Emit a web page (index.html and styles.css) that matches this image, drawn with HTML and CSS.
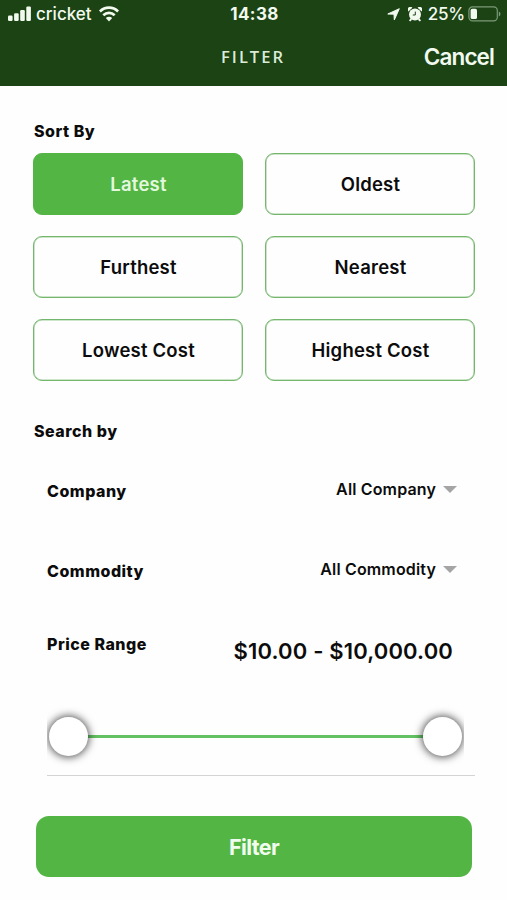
FILE: index.html
```
<!DOCTYPE html>
<html lang="en">
<head>
  <meta charset="UTF-8" />
  <meta name="viewport" content="width=device-width, initial-scale=1.0" />
  <title>Filter</title>
  <link rel="stylesheet" href="styles.css">
</head>
<body>

  <header class="header">
    <!-- Status bar -->
    <div class="status">
      <div class="status-left">
        <svg class="signal" width="24" height="16" viewBox="0 0 24 16" fill="currentColor">
          <rect x="0" y="9.6" width="4.6" height="5.4" rx="1.2"/>
          <rect x="6.1" y="7.2" width="4.6" height="7.8" rx="1.2"/>
          <rect x="12.2" y="4" width="4.6" height="11" rx="1.2"/>
          <rect x="18.3" y="0.6" width="4.6" height="14.4" rx="1.2"/>
        </svg>
        <span class="carrier">cricket</span>
        <svg class="wifi" width="20" height="16" viewBox="0 0 20 16" fill="none" stroke="currentColor" stroke-width="2.7">
          <path d="M0.9 5.5 C6 0.4 14 0.4 19.1 5.5"/>
          <path d="M4.3 9.2 C7.6 6 12.4 6 15.7 9.2"/>
          <path d="M10 15.4 L6.8 12.1 C8.6 10.4 11.4 10.4 13.2 12.1 Z" fill="currentColor" stroke="none"/>
        </svg>
      </div>
      <span class="time">14:38</span>
      <div class="status-right">
        <svg class="location" width="13" height="13" viewBox="0 0 13 13" fill="currentColor" stroke="currentColor" stroke-width="1" stroke-linejoin="round">
          <path d="M12.3 0.7 L7.3 12 L7 6.2 L0.8 6 Z"/>
        </svg>
        <svg class="alarm" width="14" height="15" viewBox="0 0 14 15">
          <g fill="currentColor">
            <circle cx="7" cy="7.6" r="6"/>
            <path d="M0.3 4.5 A2.5 2.5 0 0 1 4.4 0.8 Z"/>
            <path d="M13.7 4.5 A2.5 2.5 0 0 0 9.6 0.8 Z"/>
            <path d="M2.6 11.2 L4.1 12.8 L2.2 14.6 L1 13.4 Z"/>
            <path d="M11.4 11.2 L9.9 12.8 L11.8 14.6 L13 13.4 Z"/>
          </g>
          <path d="M7.3 4.6 V8 H4.8" fill="none" stroke="#1b4314" stroke-width="1"/>
        </svg>
        <span class="percent">25%</span>
        <svg class="battery" width="33" height="16" viewBox="0 0 33 16">
          <rect x="0.9" y="0.9" width="28.4" height="14" rx="3.6" fill="none" stroke="#7d9a79" stroke-width="1.2"/>
          <rect x="2.6" y="2.8" width="6.4" height="10.2" rx="1.6" fill="currentColor"/>
          <path d="M30.8 5.4 Q32.5 6.2 32.5 7.9 Q32.5 9.6 30.8 10.4 Z" fill="#7d9a79"/>
        </svg>
      </div>
    </div>

    <!-- Navigation bar -->
    <div class="navbar">
      <span class="title">FILTER</span>
      <a class="cancel" href="#">Cancel</a>
    </div>
  </header>

  <main class="content">
    <h2 class="heading">Sort By</h2>
    <div class="sort-grid">
      <button class="sort-btn active">Latest</button>
      <button class="sort-btn">Oldest</button>
      <button class="sort-btn">Furthest</button>
      <button class="sort-btn">Nearest</button>
      <button class="sort-btn">Lowest Cost</button>
      <button class="sort-btn">Highest Cost</button>
    </div>

    <h2 class="heading">Search by</h2>
    <div class="search">
      <div class="row">
        <span class="label">Company</span>
        <span class="select">All Company <i class="caret"></i></span>
      </div>
      <div class="row">
        <span class="label">Commodity</span>
        <span class="select">All Commodity <i class="caret"></i></span>
      </div>
      <div class="row price-row">
        <span class="label">Price Range</span>
        <span class="price">$10.00 - $10,000.00</span>
      </div>
      <div class="slider">
        <span class="thumb"></span>
        <span class="track"></span>
        <span class="thumb"></span>
      </div>
    </div>

    <button class="filter-btn">Filter</button>
  </main>

</body>
</html>
```

FILE: styles.css
```
* {
  box-sizing: border-box;
}

html, body {
  margin: 0;
  padding: 0;
}

body {
  width: 507px;
  height: 900px;
  overflow: hidden;
  font-family: Inter, Arial, sans-serif;
  background: #fefefe;
  color: #0c0c0c;
}

button {
  font-family: inherit;
  padding: 0;
  cursor: pointer;
}

/* Header */
.header {
  height: 86px;
  background: #1b4314;
  color: #f2faf0;
}

.status {
  display: grid;
  grid-template-columns: 1fr auto 1fr;
  align-items: center;
  height: 28px;
  padding: 0 6px 0 8px;
}

.status-left,
.status-right {
  display: flex;
  align-items: center;
}

.status-right {
  justify-content: flex-end;
}

.carrier {
  margin: 0 7px 0 4px;
  font-size: 17px;
  font-weight: 500;
}

.time {
  font-size: 17px;
  font-weight: 700;
  letter-spacing: 0.4px;
}

.alarm {
  margin: 0 6px 0 8px;
}

.percent {
  margin-right: 3px;
  font-size: 17px;
  font-weight: 500;
  letter-spacing: -0.2px;
}

.navbar {
  display: grid;
  grid-template-columns: 1fr auto 1fr;
  align-items: center;
  height: 57px;
  padding: 0 13px 0 12px;
}

.title {
  grid-column: 2;
  font-family: "Open Sans", sans-serif;
  font-size: 16.5px;
  font-weight: 600;
  letter-spacing: 2px;
  color: #dcebd8;
}

.cancel {
  justify-self: end;
  font-size: 22.5px;
  font-weight: 600;
  letter-spacing: -0.9px;
  color: inherit;
  text-decoration: none;
}

/* Content */
.content {
  padding: 34px 32px 0 33px;
}

.heading {
  margin: 0;
  padding-left: 1px;
  height: 33px;
  line-height: 22px;
  font-size: 16px;
  font-weight: 800;
  letter-spacing: 0.5px;
}

.sort-grid {
  display: grid;
  grid-template-columns: 1fr 1fr;
  gap: 21px 22px;
  margin-bottom: 39px;
}

.sort-btn {
  height: 62px;
  padding-left: 1px;
  border: 1.5px solid #74b66c;
  border-radius: 9px;
  background: #fefefe;
  box-shadow: inset 0 0 0 0.5px #9ccb96;
  color: #0c0c0c;
  font-size: 18.5px;
  font-weight: 600;
  letter-spacing: 0.2px;
}

.sort-btn.active {
  border-color: #53b544;
  background: #53b544;
  box-shadow: none;
  color: #e3f8df;
}

/* Search */
.search {
  margin-left: 14px;
  border-bottom: 1px solid #d4d4d4;
}

.row {
  display: flex;
  justify-content: space-between;
  align-items: center;
  height: 80px;
}

.row:first-child {
  height: 76px;
}

.row:nth-child(2) {
  height: 84px;
}

.label {
  font-size: 16px;
  font-weight: 800;
  letter-spacing: 0.5px;
}

.select {
  display: flex;
  align-items: center;
  gap: 7px;
  margin: -4px 18px 0 0;
  font-size: 16px;
  font-weight: 600;
  letter-spacing: 0.15px;
}

.caret {
  border: 7px solid transparent;
  border-top-color: #a5a5a5;
  border-bottom: 0;
}

.price-row {
  align-items: flex-start;
  height: 84px;
  padding-top: 21px;
}

.price {
  margin: 4px 22px 0 0;
  font-size: 22px;
  font-weight: 600;
  letter-spacing: 0.15px;
}

/* the thumb shadows are cut off at the slider's edges */
.slider {
  display: flex;
  align-items: center;
  width: 417px;
  height: 78px;
  padding: 0 2px;
  overflow: hidden;
}

.thumb {
  width: 39px;
  height: 39px;
  border-radius: 50%;
  background: #fff;
  box-shadow: 0 0 9px 1px rgba(0, 0, 0, 0.7);
  z-index: 1;
}

.track {
  flex: 1;
  height: 3px;
  background: #63c163;
}

.filter-btn {
  display: block;
  width: 436px;
  height: 61px;
  margin: 40px 0 0 3px;
  border: none;
  border-radius: 13px;
  background: #53b544;
  color: #f0fcee;
  font-size: 21.5px;
  font-weight: 700;
  letter-spacing: -0.6px;
}
```
